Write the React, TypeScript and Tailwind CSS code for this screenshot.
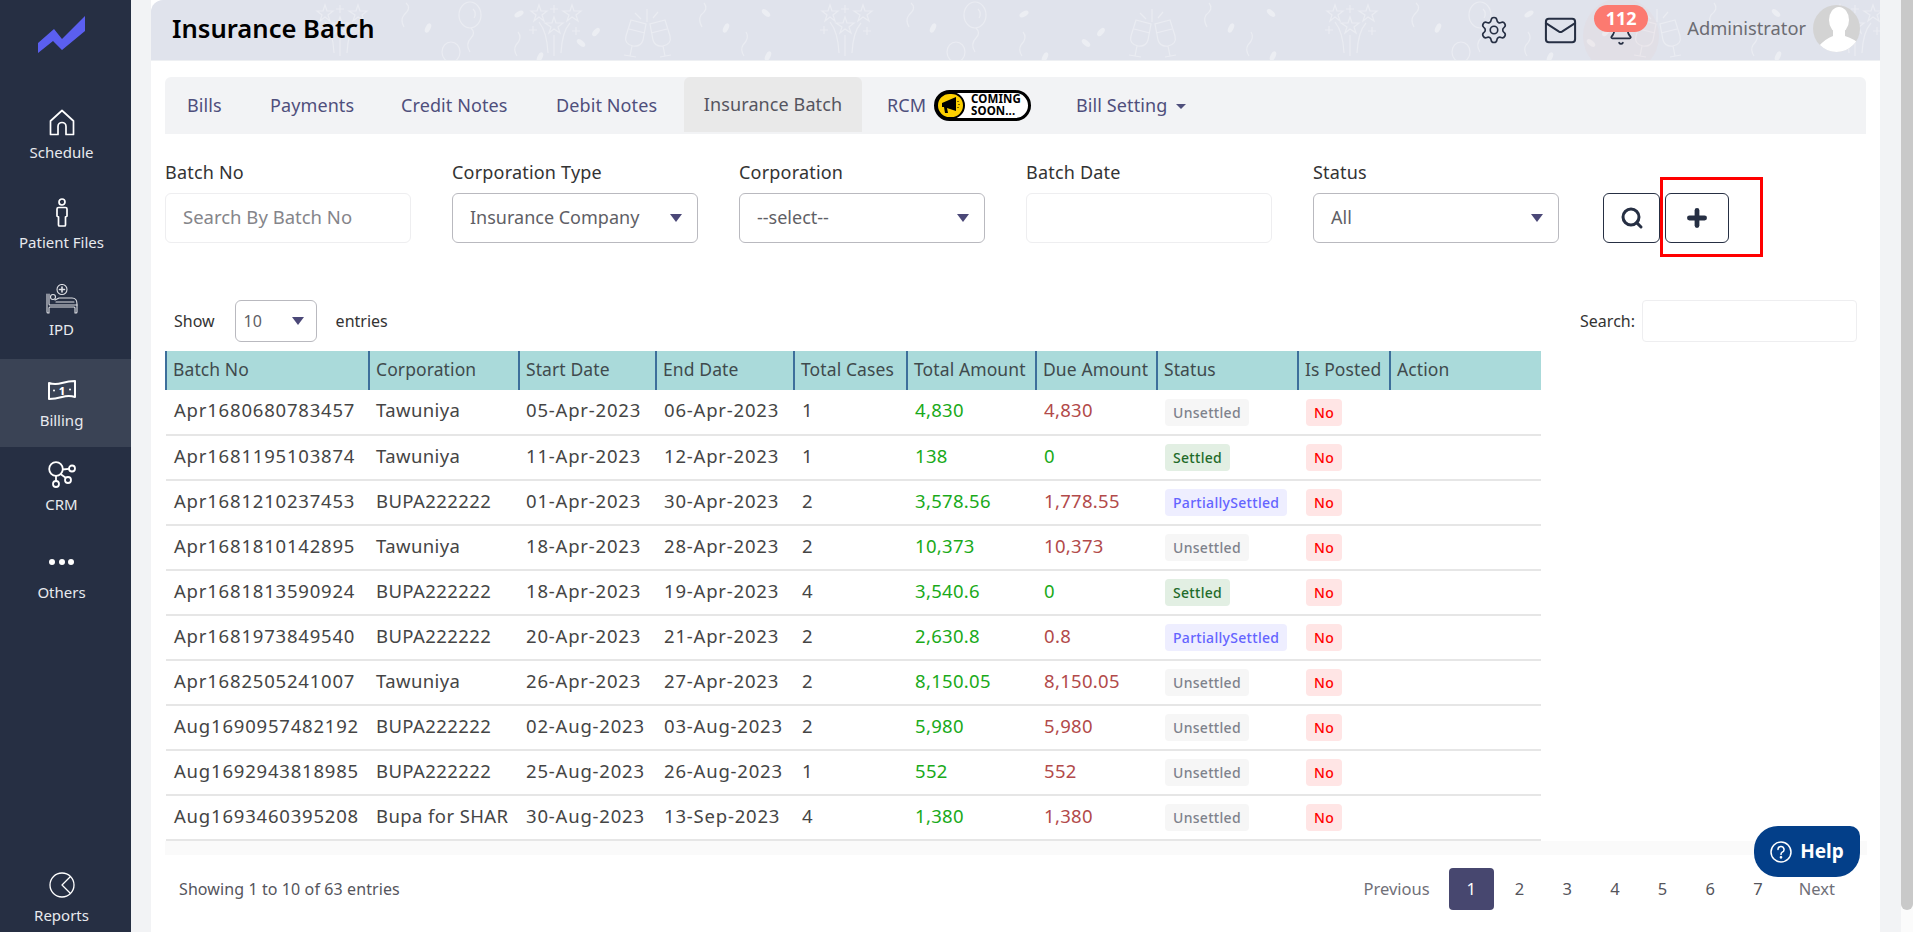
import { Bell, Mail, Plus, Search, Settings } from "lucide-react"

const rows = [
  ["Apr1680680783457", "Tawuniya", "05-Apr-2023", "06-Apr-2023", "1", "4,830", "4,830", "Unsettled"],
  ["Apr1681195103874", "Tawuniya", "11-Apr-2023", "12-Apr-2023", "1", "138", "0", "Settled"],
  ["Apr1681210237453", "BUPA222222", "01-Apr-2023", "30-Apr-2023", "2", "3,578.56", "1,778.55", "PartiallySettled"],
  ["Apr1681810142895", "Tawuniya", "18-Apr-2023", "28-Apr-2023", "2", "10,373", "10,373", "Unsettled"],
  ["Apr1681813590924", "BUPA222222", "18-Apr-2023", "19-Apr-2023", "4", "3,540.6", "0", "Settled"],
  ["Apr1681973849540", "BUPA222222", "20-Apr-2023", "21-Apr-2023", "2", "2,630.8", "0.8", "PartiallySettled"],
  ["Apr1682505241007", "Tawuniya", "26-Apr-2023", "27-Apr-2023", "2", "8,150.05", "8,150.05", "Unsettled"],
  ["Aug1690957482192", "BUPA222222", "02-Aug-2023", "03-Aug-2023", "2", "5,980", "5,980", "Unsettled"],
  ["Aug1692943818985", "BUPA222222", "25-Aug-2023", "26-Aug-2023", "1", "552", "552", "Unsettled"],
  ["Aug1693460395208", "Bupa for SHAR", "30-Aug-2023", "13-Sep-2023", "4", "1,380", "1,380", "Unsettled"],
]

const columns = [
  { label: "Batch No", width: 203 },
  { label: "Corporation", width: 150 },
  { label: "Start Date", width: 137 },
  { label: "End Date", width: 138 },
  { label: "Total Cases", width: 113 },
  { label: "Total Amount", width: 129 },
  { label: "Due Amount", width: 121 },
  { label: "Status", width: 141 },
  { label: "Is Posted", width: 92 },
  { label: "Action", width: 151 },
]

function Logo() {
  return (
    <svg width="47" height="37" viewBox="0 0 47 37" className="block">
      <path d="M0 27 L16 13 L24 23 L47 0 V15 L24 34 L15 25 L0 37 Z" fill="#5b5ff0" />
    </svg>
  )
}

function HomeIcon() {
  return (
    <svg width="26" height="27" viewBox="0 0 26 27" fill="none" stroke="white" strokeWidth="1.7" strokeLinejoin="round">
      <path d="M13 1.5 L24.5 12 V25.5 H17 V17.5 A4 4 0 0 0 9 17.5 V25.5 H1.5 V12 Z" />
    </svg>
  )
}

function PatientIcon() {
  return (
    <svg width="14" height="29" viewBox="0 0 14 29" fill="none" stroke="white" strokeWidth="1.7">
      <circle cx="7" cy="4" r="3" />
      <path d="M2 11 Q2 9.5 3.5 9.5 H10.5 Q12 9.5 12 11 V18 L10.5 19 V27 Q10.5 28 9.5 28 H4.5 Q3.5 28 3.5 27 V19 L2 18 Z" strokeLinejoin="round" />
    </svg>
  )
}

function BedIcon() {
  return (
    <svg width="32" height="31" viewBox="0 0 32 31" fill="none" stroke="#dfe1e6" strokeWidth="1.1" strokeLinecap="round" strokeLinejoin="round">
      <circle cx="16" cy="5.5" r="5" />
      <path d="M16 3 V8 M13.5 5.5 H18.5" strokeWidth="1.6" />
      <path d="M1 10 V28 Q1 29 2 29 H3 V24 Q3 23 4 23 H28 Q29 23 29 24 V29 H30 Q31 29 31 28 V20 Q31 14 26 14 H13 L9 16" />
      <circle cx="7" cy="13" r="2.5" />
      <path d="M3 10 V20 Q3 21 4 21 H31 M10 18 H28" />
    </svg>
  )
}

function MoneyIcon() {
  return (
    <svg width="28" height="20" viewBox="0 0 28 20" className="block">
      <path d="M1 3 Q7 5 14 3 T27 1 V17 Q21 15 14 17 T1 19 Z" fill="none" stroke="white" strokeWidth="2" strokeLinejoin="round" />
      <text x="14" y="14.5" textAnchor="middle" fontSize="11" fontWeight="800" fill="white" fontFamily="Noto Sans, sans-serif">1</text>
      <circle cx="6" cy="10.5" r="1" fill="white" />
      <circle cx="22" cy="9.5" r="1" fill="white" />
    </svg>
  )
}

function CrmIcon() {
  return (
    <svg width="28" height="27" viewBox="0 0 28 27" fill="none" stroke="white" strokeWidth="1.8">
      <circle cx="8" cy="8" r="6.8" />
      <circle cx="24" cy="7.5" r="3" />
      <circle cx="20" cy="19" r="3" />
      <circle cx="8" cy="23" r="3" />
      <path d="M14.5 8.5 L21 7.8 M12.5 13 L18 17 M8 15 V20" />
    </svg>
  )
}

function ReportIcon() {
  return (
    <svg width="26" height="26" viewBox="0 0 26 26" fill="none" stroke="white" strokeWidth="1.3" strokeLinejoin="round">
      <circle cx="13" cy="13" r="12" />
      <path d="M21.5 4.5 L13 13 L21.5 21.5" />
    </svg>
  )
}

function NavItem({ icon, label, top, bottom, active }: { icon: React.ReactNode; label: string; top: number; bottom: number; active?: boolean }) {
  return (
    <div className={`flex flex-col items-center pr-2 ${active ? "bg-[#3a4355]" : ""}`} style={{ paddingTop: top, paddingBottom: bottom }}>
      <div className="flex h-[30px] items-center justify-center">{icon}</div>
      <span className="mt-[5px] text-[15px] leading-[20px] text-[#e8eaee]">{label}</span>
    </div>
  )
}

function Sidebar() {
  return (
    <aside className="flex h-[932px] w-[131px] shrink-0 flex-col bg-[#262f43]">
      <div className="flex justify-center pr-2 pt-4 pb-[53px]">
        <Logo />
      </div>
      <NavItem icon={<HomeIcon />} label="Schedule" top={1} bottom={7} />
      <NavItem icon={<PatientIcon />} label="Patient Files" top={28} bottom={0} />
      <NavItem icon={<BedIcon />} label="IPD" top={32} bottom={20} />
      <NavItem icon={<MoneyIcon />} label="Billing" top={16} bottom={17} active />
      <NavItem icon={<CrmIcon />} label="CRM" top={12} bottom={1} />
      <NavItem icon={<span className="flex gap-[3.5px]">{[0, 1, 2].map((d) => <i key={d} className="block h-[6px] w-[6px] rounded-full bg-white" />)}</span>} label="Others" top={32} bottom={0} />
      <div className="mt-auto pb-[7px]">
        <NavItem icon={<ReportIcon />} label="Reports" top={0} bottom={0} />
      </div>
    </aside>
  )
}

function Stars({ dx }: { dx: number }) {
  return (
    <g transform={`translate(${dx} 0)`}>
      <path d="M830 5 L832 11 H838 L833 15 L835 21 L830 17 L825 21 L827 15 L822 11 H828 Z" />
      <path d="M863 5 L865 11 H872 L867 15 L869 21 L863 17 L858 21 L860 15 L854 11 H861 Z" />
      <path d="M845 17 L847 23 H854 L849 27 L851 33 L845 29 L840 33 L842 27 L836 23 H843 Z" />
      <path d="M830 22 Q838 32 839 53 M845 35 V56 M861 23 Q853 32 852 53 M841 9 H849 M845 5 V13 M820 30 H828 M824 26 V34 M863 31 H871 M867 27 V35" />
    </g>
  )
}

// one 505px tile of the party pattern, drawn in page coordinates of the 800-1305 stretch
function PartyTile({ dx }: { dx: number }) {
  const bits = [
    [933, 28, 25], [1024, 14, 60], [1045, 57, 25], [1101, 32, 40], [1086, 43, -50], [1231, 28, 25], [1271, 13, -50], [1273, 56, 25],
  ]
  return (
    <g transform={`translate(${dx - 151} 0)`}>
      <Stars dx={0} />
      {/* squiggles */}
      <path d="M911 3 Q917 8 909 15 Q905 20 909 27" />
      <path d="M1023 32 Q1028 38 1021 45 Q1018 50 1022 56" />
      <path d="M1209 3 Q1214 9 1206 15 Q1203 20 1207 27" />
      <path d="M1251 32 Q1255 38 1248 45 Q1245 50 1249 56" />
      {/* balloons */}
      <ellipse cx="975" cy="15" rx="11" ry="13" />
      <path d="M976 28 Q981 33 976 38 Q970 44 975 52" />
      <path d="M978 9 Q982 13 979 18" />
      <ellipse cx="956" cy="52" rx="9" ry="10" />
      {/* glasses */}
      <path d="M1136 20 L1151 24 L1148 40 Q1146 47 1138 46 Q1129 44 1131 36 Z M1134 29 L1150 33 M1137 46 L1135 56 M1129 55 L1141 57" />
      <path d="M1170 20 L1155 24 L1158 40 Q1160 47 1168 46 Q1177 44 1175 36 Z M1172 29 L1156 33 M1168 46 L1170 56 M1165 57 L1176 55" />
      <path d="M1140 13 L1146 19 M1152 9 V22 M1158 18 L1163 12" />
      {bits.map(([x, y, r]) => (
        <ellipse key={x} cx={x} cy={y} rx="2.6" ry="5" fill="#eceef3" stroke="none" transform={`rotate(${r} ${x} ${y})`} />
      ))}
    </g>
  )
}

function Confetti() {
  return (
    <svg className="absolute left-0 top-0" width="1729" height="60" fill="none" stroke="#eaecf2" strokeWidth="1.2">
      {[-505, 0, 505, 1010].map((dx) => (
        <PartyTile key={dx} dx={dx} />
      ))}
      <Stars dx={-442} />
    </svg>
  )
}

function Avatar() {
  return (
    <svg width="47" height="47" viewBox="0 0 47 47" className="block">
      <defs>
        <clipPath id="avatar-clip">
          <circle cx="23.5" cy="23.5" r="23.5" />
        </clipPath>
      </defs>
      <circle cx="23.5" cy="23.5" r="23.5" fill="#d3d3d3" />
      <g clipPath="url(#avatar-clip)" fill="white">
        <ellipse cx="26" cy="15" rx="10" ry="13" />
        <path d="M20 25 H32 V31 Q42 34 47 40 V47 H6 V41 Q12 34 20 31 Z" />
      </g>
    </svg>
  )
}

function Header() {
  return (
    <header className="relative flex h-[60px] items-center overflow-hidden rounded-tl-xl bg-[#e0e3ec] pl-[21px] pr-5 shadow-[0_1px_0_#eef0f3]">
      <Confetti />
      <h1 className="relative mb-[2px] text-[25.6px] font-semibold text-black">Insurance Batch</h1>
      <div className="relative ml-auto flex items-center">
        <Settings size={30} strokeWidth={1.3} className="text-[#262f43]" />
        <Mail size={35} strokeWidth={1.4} className="ml-[34px] text-[#262f43]" />
        <div className="relative ml-[16px] flex h-[60px] w-[54px] items-end justify-center pb-[14px]">
          <div className="absolute left-[-11px] top-[-2px] h-[76px] w-[76px] rounded-full bg-[#fc7a70]/[.04]" />
          <Bell size={26} strokeWidth={1.6} className="relative text-[#262f43]" />
          <span className="absolute left-0 top-[5px] flex h-[27px] w-[54px] items-center justify-center rounded-full bg-[#fc7a70] text-[18px] font-bold text-white">112</span>
        </div>
        <span className="ml-[39px] mb-[4px] text-[18.3px] text-[#6c6c72]">Administrator</span>
        <div className="ml-[7px] mb-[3px]">
          <Avatar />
        </div>
      </div>
    </header>
  )
}

function ComingSoon() {
  return (
    <span className="flex h-[31px] w-[97px] items-center rounded-full border-[3px] border-black bg-white">
      <span className="ml-[-1px] flex h-[27px] w-[29px] items-center justify-center rounded-full border-[2px] border-black bg-[#fdd000]">
        <svg width="20" height="18" viewBox="0 0 20 18">
          <path d="M1 7 L15 1 V15 L6 12 L7 17 H4 L3 11 H1 Z" fill="black" />
          <path d="M17 5 V6 M18 8 V9 M17 11 V12" stroke="black" />
        </svg>
      </span>
      <div className="ml-[6px] text-[11.5px] font-bold text-black">
        <div className="h-[12px] leading-[12px]">COMING</div>
        <div className="h-[12px] leading-[12px]">SOON...</div>
      </div>
    </span>
  )
}

function Tabs() {
  const tabs = [
    { label: "Bills", width: 83 },
    { label: "Payments", width: 131 },
    { label: "Credit Notes", width: 155 },
    { label: "Debit Notes", width: 150 },
  ]
  return (
    <nav className="flex h-[57px] items-center rounded-t-md bg-[#f2f3f5] pb-px text-[18px] tracking-[0.1px] text-[#4f4f7c]">
      <div className="flex">
        {tabs.map((t) => (
          <span key={t.label} className="box-border pl-[22px]" style={{ width: t.width }}>
            {t.label}
          </span>
        ))}
      </div>
      <span className="mb-[1px] flex h-[55px] w-[178px] items-center justify-center rounded-t-md bg-[#e9e9e9] text-[#55555f]">Insurance Batch</span>
      <span className="ml-[25px] w-[47px]">RCM</span>
      <ComingSoon />
      <span className="ml-[45px]">Bill Setting</span>
      <span className="ml-[9px] mt-[2px] h-0 w-0 border-x-[5px] border-t-[5px] border-x-transparent border-t-[#4f4f7c]" />
    </nav>
  )
}

function Caret() {
  return <span className="h-0 w-0 border-x-[6px] border-t-[8px] border-x-transparent border-t-[#4b4878]" />
}

function Field({ label, value, placeholder, select }: { label: string; value?: string; placeholder?: string; select?: boolean }) {
  return (
    <div className="w-[246px]">
      <div className="mb-[9px] h-[24px] text-[18px] leading-[24px] tracking-[0.2px] text-[#333]">{label}</div>
      <div className={`flex h-[50px] items-center justify-between rounded-md border bg-white pl-[17px] pr-[15px] ${select ? "border-[#b9b9bf] text-[18px] text-[#5f5f66]" : "border-[#eeeef0] text-[18.5px] text-[#85858a]"}`}>
        <span className="mb-[2px]">{value ?? placeholder}</span>
        {select && <Caret />}
      </div>
    </div>
  )
}

function Filters() {
  return (
    <div className="relative mt-[26px] flex items-end">
      <div className="flex gap-[41px]">
        <Field label="Batch No" placeholder="Search By Batch No" />
        <Field label="Corporation Type" value="Insurance Company" select />
        <Field label="Corporation" value="--select--" select />
        <Field label="Batch Date" />
        <Field label="Status" value="All" select />
      </div>
      <button className="ml-[44px] flex h-[50px] w-[57px] items-center justify-center rounded-md border border-[#262f43] bg-white">
        <Search size={24} strokeWidth={3} className="text-[#262f43]" />
      </button>
      <button className="ml-[5px] flex h-[50px] w-[64px] items-center justify-center rounded-md border border-[#262f43] bg-white">
        <Plus size={26} strokeWidth={4.4} className="text-[#262f43]" />
      </button>
      {/* red annotation box from the original screenshot */}
      <div className="absolute left-[1495px] top-[17px] h-[80px] w-[103px] border-[3px] border-[#ff0000]" />
    </div>
  )
}

function StatusBadge({ value }: { value: string }) {
  const tone: Record<string, string> = {
    Unsettled: "bg-[#f6f6f6] text-[#7e828c]",
    Settled: "bg-[#e2efe3] text-[#1f6b2a]",
    PartiallySettled: "bg-[#eeeeff] text-[#6464ff]",
  }
  return <span className={`inline-block rounded px-2 text-[14px] font-medium leading-[27px] ${tone[value]}`}>{value}</span>
}

function BatchTable() {
  return (
    <table className="w-[1375px] table-fixed border-collapse text-[18.5px] tracking-[0.3px] text-[#454545]">
      <colgroup>
        {columns.map((c) => (
          <col key={c.label} style={{ width: c.width }} />
        ))}
      </colgroup>
      <thead>
        <tr className="h-[39px] bg-[#aadada]">
          {columns.map((c) => (
            <th key={c.label} className="whitespace-nowrap border-l-2 border-[#3d6f9b] pb-[2px] pl-[6px] text-left text-[17.5px] font-normal tracking-[0.1px] text-[#3f4a4d]">
              {c.label}
            </th>
          ))}
        </tr>
      </thead>
      <tbody>
        {rows.map((r) => (
          <tr key={r[0]} className="h-[45px] border-b-2 border-[#e6e6e6]">
            <td className="whitespace-nowrap pb-[4px] pl-[8px] tracking-[0.8px]">{r[0]}</td>
            <td className="whitespace-nowrap pb-[4px] pl-[7px] tracking-[0.4px]">{r[1]}</td>
            <td className="whitespace-nowrap pb-[4px] pl-[7px] tracking-[0.8px]">{r[2]}</td>
            <td className="whitespace-nowrap pb-[4px] pl-[8px] tracking-[0.8px]">{r[3]}</td>
            <td className="pb-[4px] pl-[8px]">{r[4]}</td>
            <td className="pb-[4px] pl-[8px] text-[#1aaa1a]">{r[5]}</td>
            <td className={`pb-[4px] pl-[8px] ${r[6] === "0" ? "text-[#1aaa1a]" : "text-[#b24a4a]"}`}>{r[6]}</td>
            <td className="pb-[2px] pl-[8px]"><StatusBadge value={r[7]} /></td>
            <td className="pb-[2px] pl-[8px]">
              <span className="inline-block rounded bg-[#ffe5e5] px-2 text-[14px] font-medium leading-[27px] text-[#ff0000]">No</span>
            </td>
            <td />
          </tr>
        ))}
      </tbody>
    </table>
  )
}

function Pagination() {
  return (
    <div className="flex items-center text-[16.5px] text-[#55555c]">
      <span className="mr-[19px] text-[#707078]">Previous</span>
      <span className="mr-[2px] flex h-[42px] w-[45px] items-center justify-center rounded-sm bg-[#47476f] text-white">1</span>
      {[2, 3, 4, 5, 6, 7].map((n) => (
        <span key={n} className="w-[47.7px] text-center">{n}</span>
      ))}
      <span className="ml-[17px] text-[#707078]">Next</span>
    </div>
  )
}

export default function App() {
  return (
    <div className="flex h-[932px] w-[1913px] overflow-hidden bg-[#f2f3f5] font-['Noto_Sans','Open_Sans',sans-serif]">
      <Sidebar />
      <main className="relative ml-5 h-[932px] w-[1729px] bg-white">
        <Header />
        <div className="px-[14px] pt-[17px]">
          <Tabs />
          <Filters />
          <div className="mt-[57px] flex h-[42px] items-center justify-between">
            <div className="flex items-center text-[16px] text-[#333]">
              <span className="mb-px ml-[9px]">Show</span>
              <span className="ml-[20px] flex h-[42px] w-[82px] items-center justify-between rounded-md border border-[#b9b9bf] pl-2 pr-[12px] text-[#5f5f66]">
                10
                <Caret />
              </span>
              <span className="mb-px ml-[19px]">entries</span>
            </div>
            <div className="flex items-center text-[16px] text-[#333]">
              Search:
              <span className="ml-[7px] mr-[9px] block h-[42px] w-[215px] rounded border border-[#eeeef0]" />
            </div>
          </div>
          <div className="mt-[9px]">
            <BatchTable />
          </div>
          <div className="h-[14px] w-[1702px] bg-[#fafafa]" />
          <div className="mt-[13px] flex items-center justify-between">
            <span className="ml-[14px] text-[16px] tracking-[0.1px] text-[#55555c]">Showing 1 to 10 of 63 entries</span>
            <div className="mr-[31px]">
              <Pagination />
            </div>
          </div>
        </div>
        <button className="absolute left-[1603px] top-[826px] flex h-[51px] w-[106px] items-center justify-center gap-2 rounded-[24px_10px_24px_24px] bg-[#033f89] text-[19px] font-bold text-white">
          <svg width="22" height="22" viewBox="0 0 22 22" fill="none" stroke="white" strokeWidth="1.5">
            <circle cx="11" cy="11" r="10" />
            <path d="M8 8.5 A3 3 0 1 1 12 11.3 Q11 11.8 11 13.5" strokeLinecap="round" />
            <circle cx="11" cy="16.3" r="0.6" fill="white" />
          </svg>
          Help
        </button>
      </main>
      {/* page scrollbar */}
      <div className="ml-auto h-[932px] w-3 bg-[#fbfbfb]">
        <div className="h-[910px] rounded-b-md bg-[#c9c9c9]" />
      </div>
    </div>
  )
}
